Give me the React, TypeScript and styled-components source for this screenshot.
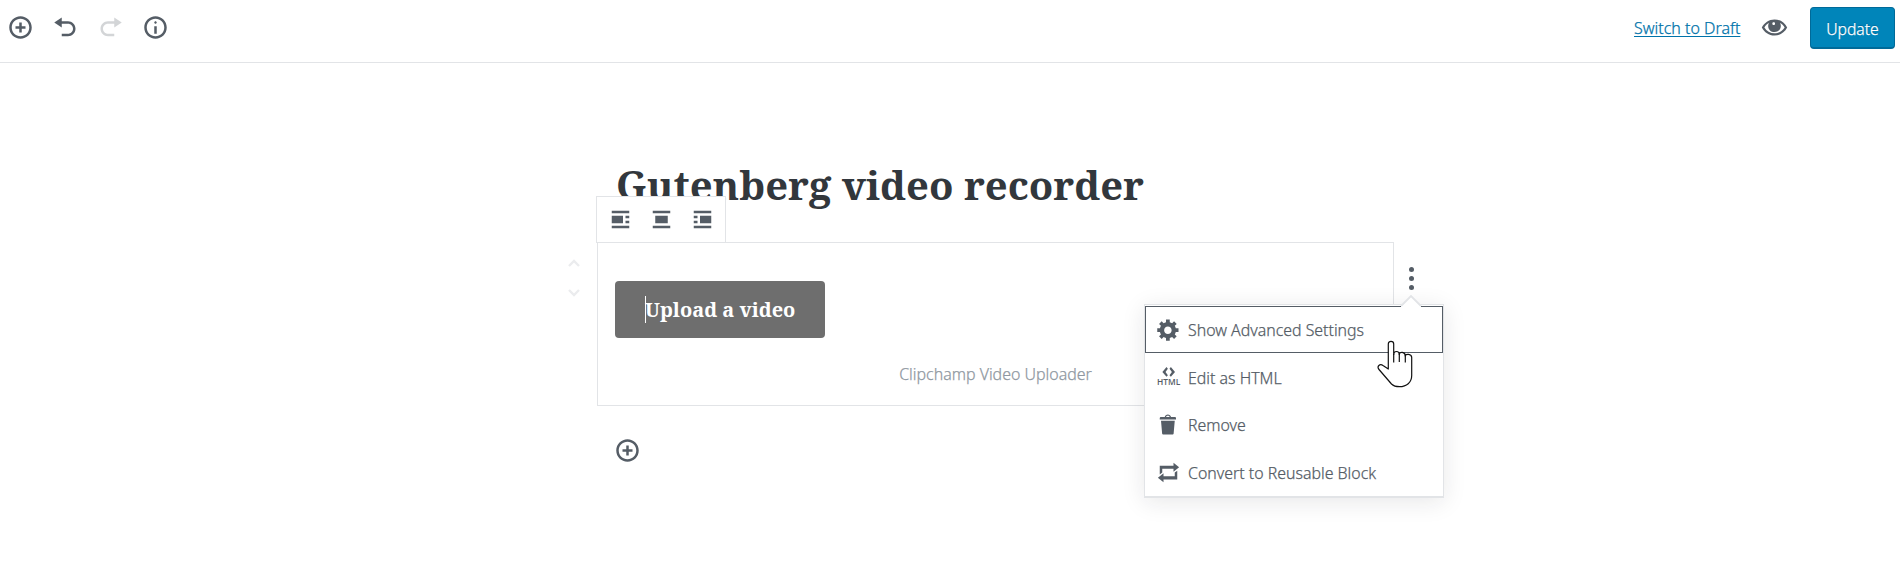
import React from 'react';
import styled, { createGlobalStyle } from 'styled-components';

const sans = "'Noto Sans', 'Open Sans', sans-serif";
const serif = "'Noto Serif', 'Droid Serif', 'DejaVu Serif Condensed', 'DejaVu Serif', serif";

const GlobalStyle = createGlobalStyle`
  *, *::before, *::after { box-sizing: border-box; }
  body { margin: 0; background: #fff; font-family: ${sans}; font-weight: 300; color: #555d66; overflow: hidden; -webkit-text-stroke: 0.25px currentColor; }
  button { font: inherit; color: inherit; background: none; border: 0; padding: 0; margin: 0; cursor: pointer; }
`;

const paths = {
  insert: 'M10 1c-5 0-9 4-9 9s4 9 9 9 9-4 9-9-4-9-9-9zm0 16c-3.9 0-7-3.1-7-7s3.1-7 7-7 7 3.1 7 7-3.1 7-7 7zm1-11H9v3H6v2h3v3h2v-3h3V9h-3V6z',
  undo: 'M12 5H7V2L1 6l6 4V7h5c2.2 0 4 1.8 4 4s-1.8 4-4 4H7v2h5c3.3 0 6-2.7 6-6s-2.7-6-6-6z',
  redo: 'M8 5h5V2l6 4-6 4V7H8c-2.2 0-4 1.8-4 4s1.8 4 4 4h5v2H8c-3.3 0-6-2.7-6-6s2.7-6 6-6z',
  info: 'M9 15h2V9H9v6zm1-10c-.5 0-1 .5-1 1s.5 1 1 1 1-.5 1-1-.5-1-1-1zm0-4c-5 0-9 4-9 9s4 9 9 9 9-4 9-9-4-9-9-9zm0 16c-3.9 0-7-3.1-7-7s3.1-7 7-7 7 3.1 7 7-3.1 7-7 7z',
  left: 'M3 5h14V3H3v2zm9 8V7H3v6h9zm2-4h3V7h-3v2zm0 4h3v-2h-3v2zM3 17h14v-2H3v2z',
  center: 'M3 5h14V3H3v2zm12 8V7H5v6h10zM3 17h14v-2H3v2z',
  right: 'M3 5h14V3H3v2zm0 4h3V7H3v2zm14 4V7H8v6h9zM3 13h3v-2H3v2zm0 4h14v-2H3v2z',
  gear: 'M18 12h-2.18c-.17.7-.44 1.35-.81 1.93l1.54 1.54-2.1 2.1-1.54-1.54c-.58.36-1.23.63-1.91.79V19H8v-2.18c-.68-.16-1.33-.43-1.91-.79l-1.54 1.54-2.12-2.12 1.54-1.54c-.36-.58-.63-1.23-.79-1.91H1V9.03h2.17c.16-.7.44-1.35.8-1.94L2.43 5.55l2.1-2.1 1.54 1.54c.58-.37 1.24-.64 1.93-.81V2h3v2.18c.68.16 1.33.43 1.91.79l1.54-1.54 2.12 2.12-1.54 1.54c.36.59.64 1.24.8 1.94H18V12zm-8.5 1.5c1.66 0 3-1.34 3-3s-1.34-3-3-3-3 1.34-3 3 1.34 3 3 3z',
  brackets: 'M9.5 2.9L7.6 5.5l1.9 2.6-1.1 1.3-3.3-3.9 3.3-3.9zm1.3 5.2l1.9-2.6-1.9-2.6 1.1-1.3 3.3 3.9-3.3 3.9z',
  trash: 'M12 4h3c.6 0 1 .4 1 1v1H3V5c0-.6.5-1 1-1h3c.2-1.1 1.3-2 2.5-2s2.3.9 2.5 2zM8 4h3c-.2-.6-.9-1-1.5-1S8.2 3.4 8 4zM4 7h11l-.9 10.1c0 .5-.5.9-1 .9H5.9c-.5 0-.9-.4-1-.9L4 7z',
  repeat: 'M5 7v3l-2 1.5V4.5h11V2.2l4.500 3.600-4.500 3.600V7H5zm10 6v-3l2-1.500V15.500H6v2.300l-4.500-3.600 4.500-3.600V13h9z',
  eye: 'M10 4C5.8 4 2.5 6.4.6 10c1.9 3.6 5.2 6 9.4 6s7.5-2.4 9.4-6C17.5 6.4 14.2 4 10 4zm0 10.3c-3.2 0-5.8-1.6-7.5-4.3C3.4 8.5 4.5 7.4 5.9 6.7 5.5 7.4 5.3 8.1 5.3 8.8c0 2.6 2.1 4.6 4.7 4.6s4.7-2 4.7-4.6c0-.7-.2-1.4-.6-2.1 1.4.7 2.5 1.800 3.400 3.300-1.700 2.700-4.300 4.300-7.500 4.300zM9.400 6.200c.6 0 1 .4 1 1s-.4 1-1 1-1-.4-1-1 .4-1 1-1z',
};
type IconName = keyof typeof paths;

const Svg = styled.svg`
  display: block;
  flex: none;
  fill: currentColor;
  -webkit-text-stroke: 0;
`;

const Icon = ({ name, size = 25 }: { name: IconName; size?: number }) => (
  <Svg width={size} height={size} viewBox="0 0 20 20">
    <path d={paths[name]} />
    {name === 'brackets' && (
      <text x="10.1" y="16.2" textAnchor="middle" fontSize="7" fontWeight="600" fontFamily="Open Sans, sans-serif" textLength="18.6" lengthAdjust="spacingAndGlyphs">HTML</text>
    )}
  </Svg>
);

const Page = styled.div`
  width: 1900px;
  height: 584px;
  background: #fff;
`;

const Header = styled.header`
  display: flex;
  justify-content: space-between;
  height: 63px;
  padding: 7px 5px 0 8px;
  border-bottom: 1px solid #e2e4e7;
`;

const Tools = styled.div`
  display: flex;
  align-items: flex-start;
  gap: 20px;
  padding-top: 8px;
`;

const IconButton = styled.button<{ $faded?: boolean }>`
  display: block;
  color: ${p => (p.$faded ? '#d3d5d7' : '#555d66')};
`;

const Actions = styled.div`
  display: flex;
  align-items: flex-start;
`;

const DraftLink = styled.a`
  margin-top: 7px;
  width: 106px;
  margin-right: 21px;
  white-space: nowrap;
  font-size: 16px;
  line-height: 28px;
  color: #0073aa;
  text-decoration: underline;
  text-decoration-thickness: 1px;
  text-underline-offset: 2px;
`;

const Preview = styled(IconButton)`
  margin: 7px 22px 0 0;
`;

const UpdateButton = styled.button`
  width: 85px;
  height: 42px;
  padding-top: 2px;
  border: 1px solid #006a99;
  border-bottom-width: 2px;
  border-radius: 4px;
  background: #0085ba;
  color: #fff;
  font-size: 15.7px;
  text-shadow: 0 -1px 1px #006799;
`;

const Editor = styled.main`
  width: 798px;
  margin-left: 596px;
  padding-top: 97px;
`;

const Title = styled.h1`
  margin: 0;
  height: 82px;
  padding-left: 20px;
  font: 700 40px/50px ${serif};
  color: #32373c;
  white-space: nowrap;
  -webkit-text-stroke: 0;
`;

const Block = styled.section`
  position: relative;
  margin-left: 1px;
  height: 164px;
  padding: 38px 17px 0;
  border: 1px solid #e2e4e7;
`;

const BlockToolbar = styled.div`
  position: absolute;
  left: -2px;
  top: -47px;
  display: flex;
  gap: 16.4px;
  width: 130px;
  height: 47px;
  padding: 10px 0 0 10.5px;
  border: 1px solid #e2e4e7;
  background: #fff;
`;

const Movers = styled.div`
  position: absolute;
  left: -30px;
  top: 16px;
  display: grid;
  gap: 22px;
  color: #ebecee;
`;

const Chevron = styled.svg`
  display: block;
  fill: none;
  stroke: currentColor;
  stroke-width: 2.4;
`;

const UploadButton = styled.button`
  display: flex;
  align-items: center;
  width: 210px;
  height: 57px;
  padding-left: 30px;
  border-radius: 4px;
  background: #6e6e6e;
  color: #fff;
  white-space: nowrap;
  font: 700 20px/27px ${serif};
  -webkit-text-stroke: 0;
`;

const Caret = styled.span`
  width: 1px;
  height: 27px;
  margin-right: -1px;
  background: #fff;
`;

const Caption = styled.p`
  margin: 22px 0 0;
  text-align: center;
  font-size: 15.95px;
  line-height: 28px;
  color: #8f98a1;
`;

const MoreButton = styled.button`
  position: absolute;
  left: 811px;
  top: 24px;
  display: grid;
  gap: 4px;
`;

const Dot = styled.span`
  width: 5px;
  height: 5px;
  border-radius: 50%;
  background: #555d66;
`;

const Menu = styled.div`
  position: absolute;
  left: 546px;
  top: 61px;
  width: 300px;
  height: 194px;
  padding-top: 1px;
  border: 1px solid #e2e4e7;
  border-bottom-width: 2px;
  background: #fff;
  box-shadow: 0 4px 22px rgba(25, 30, 35, 0.1);
`;

const MenuArrow = styled.svg`
  position: absolute;
  left: 255px;
  top: -10px;
  display: block;
`;

const MenuItem = styled.button<{ $focused?: boolean }>`
  display: flex;
  align-items: center;
  gap: 6px;
  width: 298px;
  height: ${p => (p.$focused ? '47px' : '47.5px')};
  margin-bottom: ${p => (p.$focused ? '0.5px' : '0')};
  padding-left: 10px;
  border: 1px solid ${p => (p.$focused ? '#555d66' : 'transparent')};
  font-size: 15.9px;
  white-space: nowrap;
`;

const MenuLabel = styled.span`
  padding: 1px 0 0 1px;
`;

const Pointer = styled.svg`
  position: absolute;
  left: 232px;
  top: 35px;
`;

const Appender = styled.div`
  padding: 32px 0 0 19px;
`;

const items: { icon: IconName; label: string }[] = [
  { icon: 'gear', label: 'Show Advanced Settings' },
  { icon: 'brackets', label: 'Edit as HTML' },
  { icon: 'trash', label: 'Remove' },
  { icon: 'repeat', label: 'Convert to Reusable Block' },
];

export default function App() {
  return (
    <Page>
      <GlobalStyle />
      <Header>
        <Tools>
          <IconButton><Icon name="insert" /></IconButton>
          <IconButton><Icon name="undo" /></IconButton>
          <IconButton $faded><Icon name="redo" /></IconButton>
          <IconButton><Icon name="info" /></IconButton>
        </Tools>
        <Actions>
          <DraftLink>Switch to Draft</DraftLink>
          <Preview><Icon name="eye" size={27} /></Preview>
          <UpdateButton>Update</UpdateButton>
        </Actions>
      </Header>
      <Editor>
        <Title>Gutenberg video recorder</Title>
        <Block>
          <BlockToolbar>
            <Icon name="left" />
            <Icon name="center" />
            <Icon name="right" />
          </BlockToolbar>
          <Movers>
            <Chevron width="12" height="8"><path d="M1 7l5-5 5 5" /></Chevron>
            <Chevron width="12" height="8"><path d="M1 1l5 5 5-5" /></Chevron>
          </Movers>
          <UploadButton><Caret />Upload a video</UploadButton>
          <Caption>Clipchamp Video Uploader</Caption>
          <MoreButton><Dot /><Dot /><Dot /></MoreButton>
          <Menu>
            {items.map((item, i) => (
              <MenuItem key={item.label} $focused={i === 0}>
                <Icon name={item.icon} />
                <MenuLabel>{item.label}</MenuLabel>
              </MenuItem>
            ))}
            <MenuArrow width="22" height="13" viewBox="0 0 22 13">
              <path d="M1 11L11 1l10 10v2H1z" fill="#fff" />
              <path d="M1 11L11 1l10 10" fill="none" stroke="#e2e4e7" strokeWidth="1.8" />
            </MenuArrow>
            <Pointer width="36" height="49" viewBox="0 0 36 49" fill="none" stroke="#111" strokeWidth="1.2" strokeLinejoin="round">
              <path d="M11.3 29V4C11.3 .4 16.700 .4 16.700 4V14.500C16.700 10.500 22.300 10.500 22.300 14.500C22.300 11.500 28.300 11.500 28.300 16C28.300 13.500 34.700 13.500 34.700 17.500V35.500C34.700 42.500 29.500 46.700 22.500 46.700C18.500 46.700 16.500 46 14.500 44L2 29.500C-.5 26.500 2.800 23.200 6 25.500Z" fill="#fff" />
              <path d="M16.700 14v8.500M22.300 14v8M28.300 15.500v7" />
            </Pointer>
          </Menu>
        </Block>
        <Appender>
          <IconButton><Icon name="insert" /></IconButton>
        </Appender>
      </Editor>
    </Page>
  );
}
